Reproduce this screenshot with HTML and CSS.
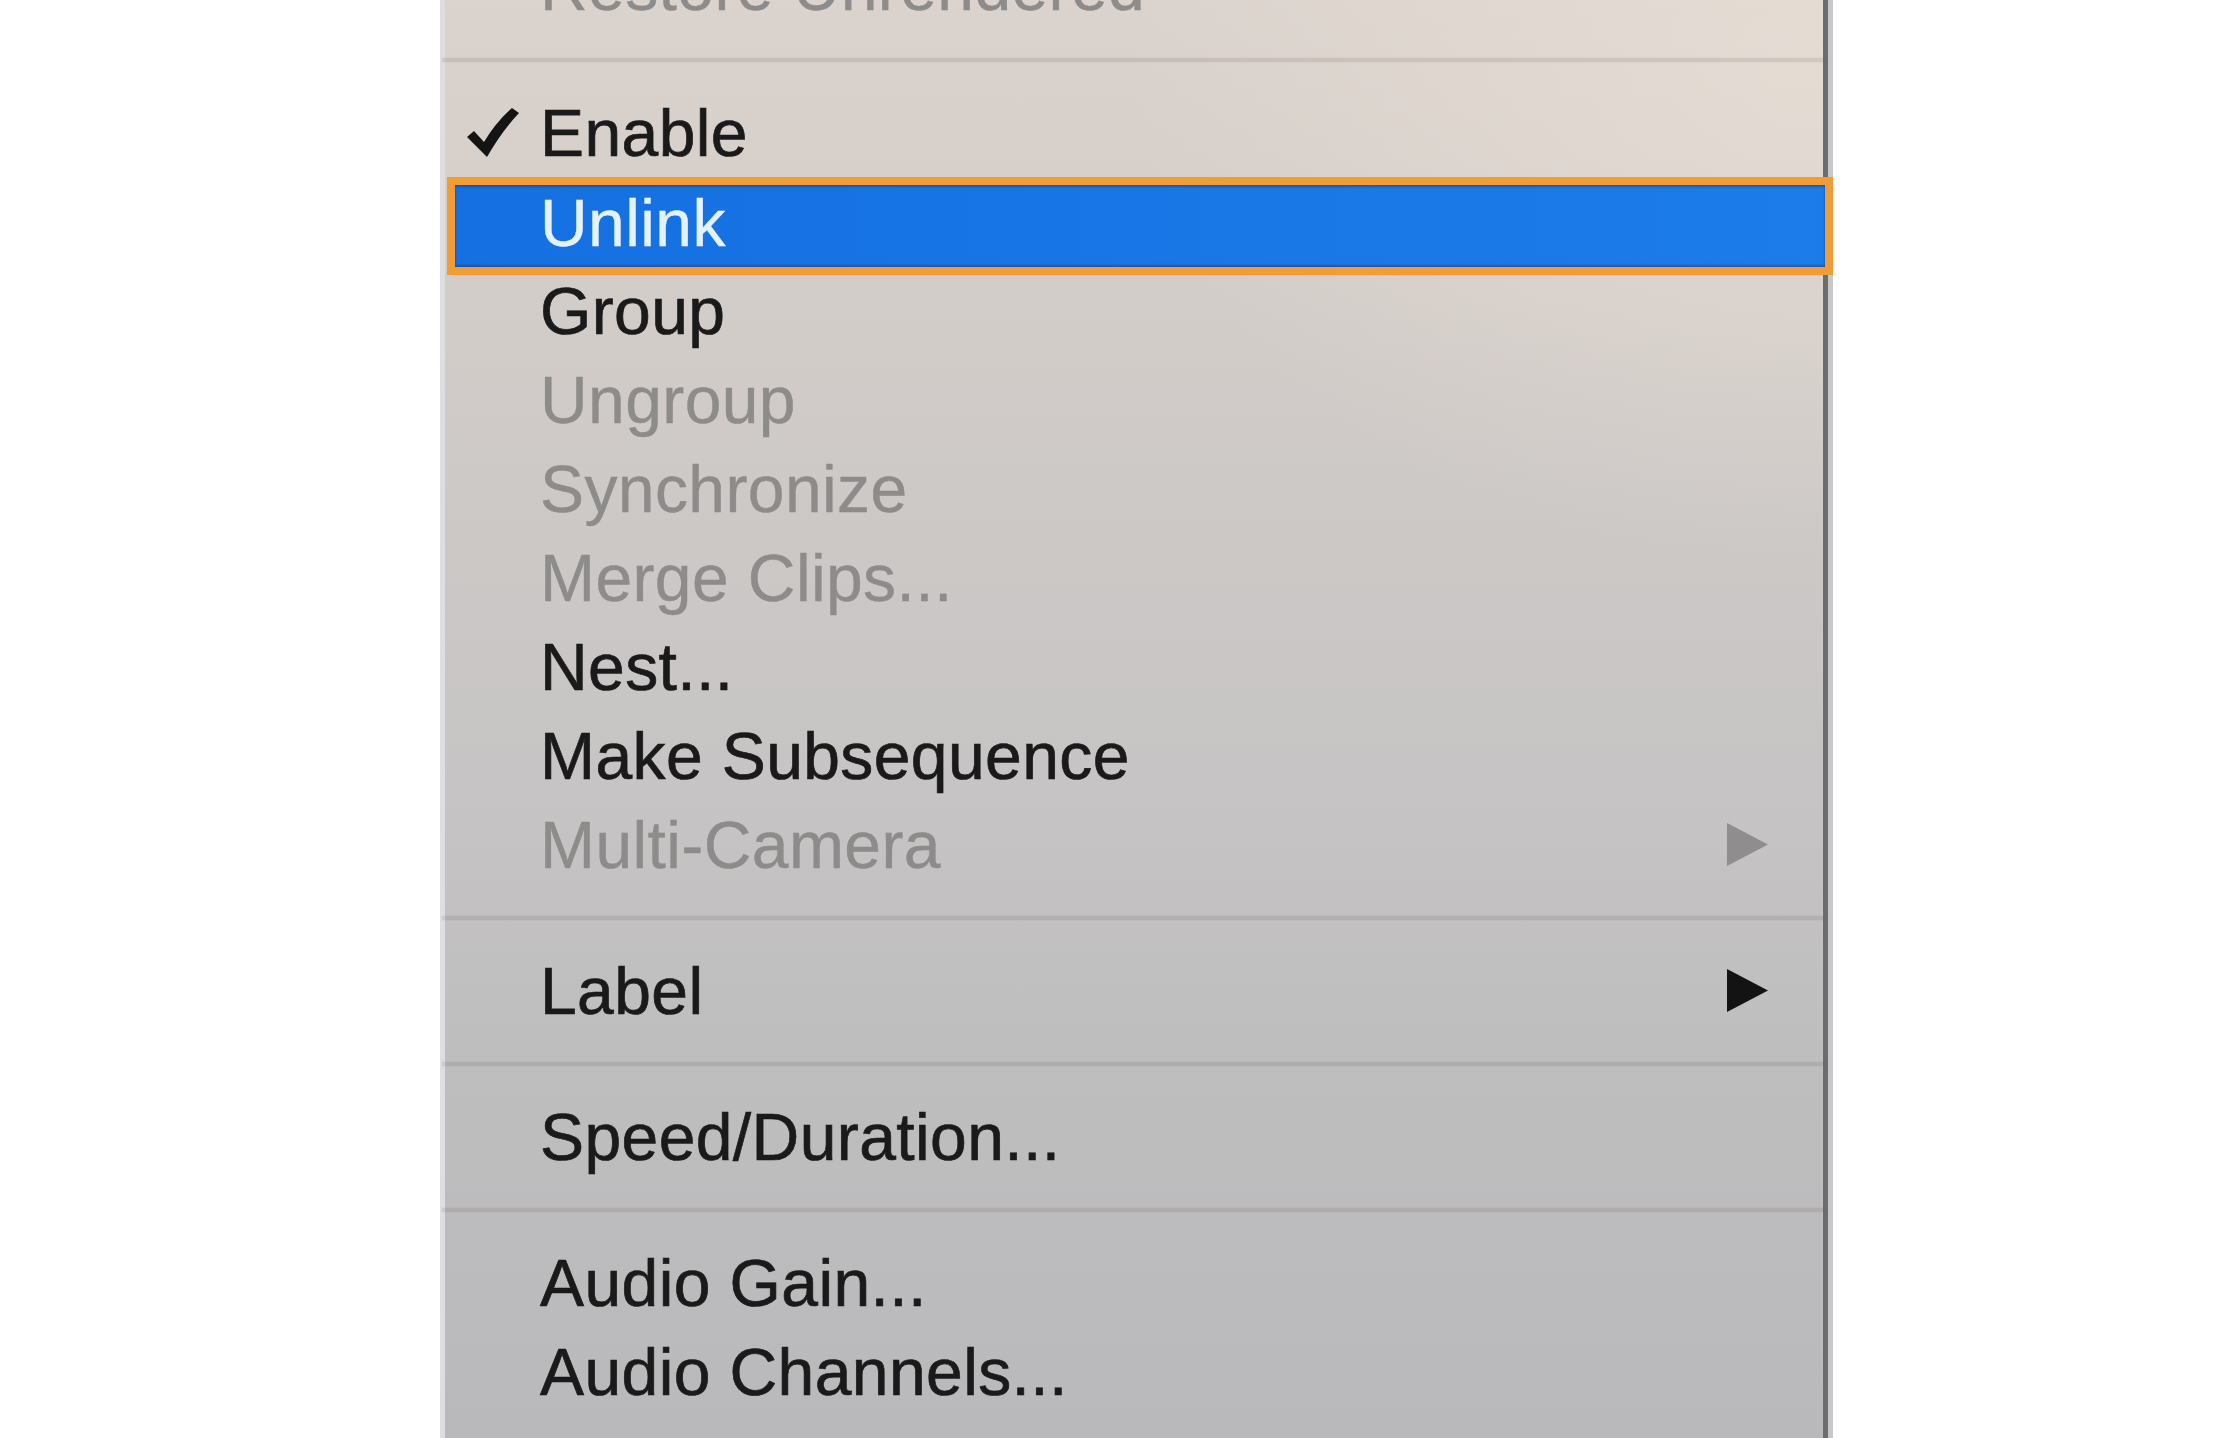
FILE: index.html
```html
<!DOCTYPE html>
<html lang="en">
<head>
<meta charset="utf-8">
<title>Clip context menu</title>
<link rel="stylesheet" href="styles.css">
</head>
<body>
<div class="stage">
  <div class="menu">
    <div class="item disabled"><span class="check"></span><span class="label">Restore Unrendered</span></div>
    <div class="sep"><div class="line"></div></div>
    <div class="item">
      <span class="check">
        <svg width="54" height="50" viewBox="0 0 54 50"><path d="M1 30 L8 24 L18 35 Q30 15 46 1 L53 6 Q36 24 21 50 Z" fill="#141414"/></svg>
      </span>
      <span class="label">Enable</span>
    </div>
    <div class="item active"><span class="check"></span><span class="label">Unlink</span></div>
    <div class="item"><span class="check"></span><span class="label">Group</span></div>
    <div class="item disabled"><span class="check"></span><span class="label">Ungroup</span></div>
    <div class="item disabled"><span class="check"></span><span class="label">Synchronize</span></div>
    <div class="item disabled"><span class="check"></span><span class="label">Merge Clips...</span></div>
    <div class="item"><span class="check"></span><span class="label">Nest...</span></div>
    <div class="item"><span class="check"></span><span class="label">Make Subsequence</span></div>
    <div class="item disabled"><span class="check"></span><span class="label">Multi-Camera</span>
      <svg class="arrow" width="41" height="43" viewBox="0 0 41 43"><polygon points="0,0 41,21.5 0,43"/></svg>
    </div>
    <div class="sep"><div class="line"></div></div>
    <div class="item"><span class="check"></span><span class="label">Label</span>
      <svg class="arrow" width="41" height="43" viewBox="0 0 41 43"><polygon points="0,0 41,21.5 0,43"/></svg>
    </div>
    <div class="sep"><div class="line"></div></div>
    <div class="item"><span class="check"></span><span class="label">Speed/Duration...</span></div>
    <div class="sep"><div class="line"></div></div>
    <div class="item"><span class="check"></span><span class="label">Audio Gain...</span></div>
    <div class="item"><span class="check"></span><span class="label">Audio Channels...</span></div>
    <div class="item"><span class="check"></span><span class="label">&nbsp;</span></div>
  </div>
</div>
</body>
</html>
```
FILE: styles.css
```css
html, body {
  margin: 0;
  padding: 0;
  background: #ffffff;
  height: 1438px;
  overflow: hidden;
}

.stage {
  padding-left: 440px;
  width: 1393px;
}

.menu {
  margin-top: -58px;
  box-sizing: border-box;
  width: 1388px;
  border-left: 5px solid #dedee2;
  border-right: 5px solid #6c6b6e;
  box-shadow: 5px 0 0 #c7c6c9;
  background:
    radial-gradient(ellipse 700px 500px at 100% 8%, rgba(238, 228, 218, 0.55), rgba(238, 228, 218, 0) 100%),
    linear-gradient(to bottom, #dcd4ce 0px, #d6cfca 250px, #cdc9c7 550px, #c6c4c4 850px, #bfbebf 1100px, #b9b9bb 1500px);
  font-family: "Liberation Sans", Arial, Helvetica, sans-serif;
  font-size: 66px;
  letter-spacing: 0.4px;
  color: #1b1a1b;
}

.item {
  display: flex;
  align-items: center;
  height: 89px;
  padding-left: 21px;
  padding-right: 55px;
  box-sizing: border-box;
}

.check {
  flex: 0 0 74px;
  display: flex;
  align-items: center;
}

.check svg {
  display: block;
  margin-top: -2px;
}

.label {
  flex: 1;
  white-space: nowrap;
  -webkit-text-stroke: 0.7px currentColor;
}

.item.disabled {
  color: #8e8b8b;
}

.item.disabled .label {
  -webkit-text-stroke: 0.4px currentColor;
}

.item.active {
  height: 98px;
  margin: 0 -10px -9px 2px;
  padding-left: 11px;
  padding-bottom: 6px;
  border: 8px solid #f09c38;
  background: linear-gradient(to right, #1570e2, #1c7ce9);
  box-shadow: inset 0 2px 2px rgba(20, 40, 80, 0.35), inset 0 -2px 2px rgba(20, 40, 80, 0.35);
  color: #e4f2fc;
}

.item.active .label {
  -webkit-text-stroke: 0.4px currentColor;
}

.arrow {
  flex: 0 0 auto;
  display: block;
  fill: #131313;
}

.item.disabled .arrow {
  fill: #8f8d8e;
}

.sep {
  height: 57px;
  padding-top: 27px;
  box-sizing: border-box;
}

.line {
  height: 4px;
  margin-left: -3px;
  background: rgba(70, 60, 60, 0.12);
  box-shadow: 0 0 2px rgba(70, 60, 60, 0.12);
}
```
